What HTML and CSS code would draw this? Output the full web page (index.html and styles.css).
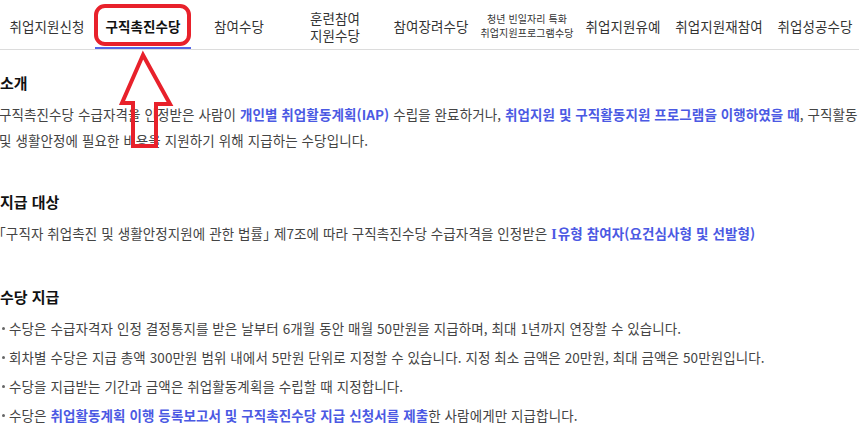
FILE: index.html
```html
<!DOCTYPE html>
<html lang="ko">
<head>
<meta charset="utf-8">
<title>구직촉진수당</title>
<link rel="stylesheet" href="styles.css">
</head>
<body>
<div class="page">
  <nav class="tabs">
    <a class="tab">취업지원신청</a>
    <a class="tab active">구직촉진수당</a>
    <a class="tab">참여수당</a>
    <a class="tab two"><span class="ln">훈련참여</span><span class="ln">지원수당</span></a>
    <a class="tab">참여장려수당</a>
    <a class="tab small"><span class="ln">청년 빈일자리 특화</span><span class="ln">취업지원프로그램수당</span></a>
    <a class="tab">취업지원유예</a>
    <a class="tab">취업지원재참여</a>
    <a class="tab">취업성공수당</a>
  </nav>

  <main class="content">
    <section class="sec">
      <h2 class="title">소개</h2>
      <p class="text">구직촉진수당 수급자격을 인정받은 사람이 <span class="hl">개인별 취업활동계획(IAP)</span> 수립을 완료하거나, <span class="hl">취업지원 및 구직활동지원 프로그램을 이행하였을 때</span>, 구직활동<br>및 생활안정에 필요한 비용을 지원하기 위해 지급하는 수당입니다.</p>
    </section>
    <section class="sec">
      <h2 class="title">지급 대상</h2>
      <p class="text"><span class="brk">「</span>구직자 취업촉진 및 생활안정지원에 관한 법률<span class="brk">」</span> 제7조에 따라 구직촉진수당 수급자격을 인정받은 <span class="hl"><span class="rn">I</span>유형 참여자(요건심사형 및 선발형)</span></p>
    </section>
    <section class="sec">
      <h2 class="title">수당 지급</h2>
      <ul class="list">
        <li class="item">수당은 수급자격자 인정 결정통지를 받은 날부터 6개월 동안 매월 50만원을 지급하며, 최대 1년까지 연장할 수 있습니다.</li>
        <li class="item">회차별 수당은 지급 총액 300만원 범위 내에서 5만원 단위로 지정할 수 있습니다. 지정 최소 금액은 20만원, 최대 금액은 50만원입니다.</li>
        <li class="item">수당을 지급받는 기간과 금액은 취업활동계획을 수립할 때 지정합니다.</li>
        <li class="item">수당은 <span class="hl">취업활동계획 이행 등록보고서 및 구직촉진수당 지급 신청서를 제출</span>한 사람에게만 지급합니다.</li>
      </ul>
    </section>
  </main>

  <div class="mark-box"></div>
  <svg class="mark-arrow" width="859" height="432" viewBox="0 0 859 432" aria-hidden="true">
    <polygon points="143,55 122,103 133,103 133,146 156,146 156,104 170,104" fill="none" stroke="#e8212b" stroke-width="4" stroke-linejoin="miter"/>
  </svg>
</div>
</body>
</html>
```

FILE: styles.css
```css
html, body {
  margin: 0;
  padding: 0;
  background: #fff;
}

body {
  width: 859px;
  height: 432px;
  overflow: hidden;
  font-family: "Noto Sans CJK KR", "Noto Sans", sans-serif;
  color: #444;
}

.page {
  position: relative;
  width: 859px;
  height: 432px;
  overflow: hidden;
}

.tabs {
  display: flex;
  height: 49px;
  border-bottom: 1px solid #dcdcdc;
  margin-left: -1px;
  width: 1000px;
}

.tab {
  position: relative;
  flex: 0 0 96px;
  display: flex;
  flex-direction: column;
  align-items: center;
  justify-content: center;
  text-align: center;
  font-size: 13.5px;
  letter-spacing: 0.1px;
  color: #333;
  padding-top: 3px;
  box-sizing: border-box;
  white-space: nowrap;
}

.ln {
  display: block;
}

.tab.two {
  line-height: 17px;
  padding-top: 4px;
}

.tab.small {
  font-size: 10px;
  letter-spacing: 0.1px;
  line-height: 14px;
  padding-top: 2px;
}

.tab.active {
  font-weight: 700;
  color: #111;
}

.tab.active::after {
  content: "";
  position: absolute;
  left: 0;
  right: 0;
  bottom: 0;
  height: 2px;
  background: #5566e8;
}

.content {
  margin-left: -1px;
  padding-top: 22px;
  display: flex;
  flex-direction: column;
  gap: 38px;
}

.sec {
  display: flex;
  flex-direction: column;
  gap: 7px;
}

.title {
  margin: 0 0 0 1px;
  font-size: 15px;
  line-height: 22px;
  font-weight: 700;
  letter-spacing: 0;
  color: #111;
}

.text {
  margin: 0;
  font-size: 13.5px;
  line-height: 26px;
  letter-spacing: 0.1px;
  white-space: nowrap;
}

.brk {
  font-feature-settings: "halt";
}

.hl {
  color: #4b59e3;
  font-weight: 600;
}

.rn {
  font-family: "Liberation Serif", serif;
  font-size: 14px;
  margin-right: 1px;
}

.list {
  list-style: none;
  margin: 0;
  padding: 0;
  display: flex;
  flex-direction: column;
  gap: 3px;
}

.item {
  position: relative;
  padding-left: 10px;
  font-size: 13.5px;
  line-height: 26px;
  letter-spacing: 0.1px;
  white-space: nowrap;
}

.item::before {
  content: "";
  position: absolute;
  left: 3px;
  top: 12px;
  width: 3px;
  height: 3px;
  border-radius: 50%;
  background: #666;
}

.mark-box {
  position: absolute;
  left: 94px;
  top: 4px;
  width: 97px;
  height: 42px;
  box-sizing: border-box;
  border: 4px solid #e8212b;
  border-radius: 11px;
}

.mark-arrow {
  position: absolute;
  left: 0;
  top: 0;
  pointer-events: none;
}
```
